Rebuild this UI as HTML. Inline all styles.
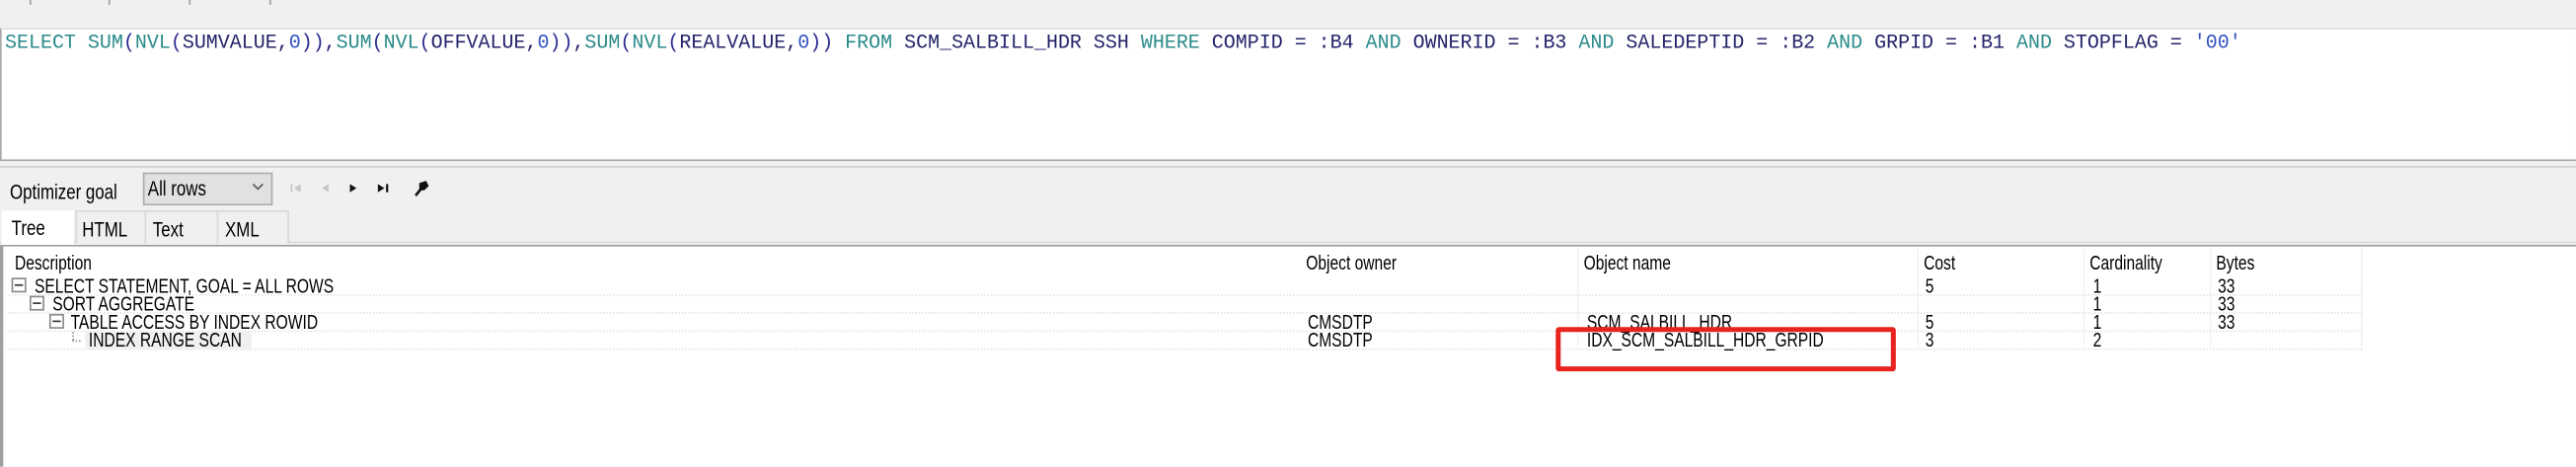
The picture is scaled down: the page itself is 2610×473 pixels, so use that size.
<!DOCTYPE html>
<html><head><meta charset="utf-8"><style>
html,body{margin:0;padding:0;width:2610px;height:471px;overflow:hidden;background:#f0f0f0}
#s{position:absolute;left:0;top:0;width:1568px;height:283px;transform:scale(1.6645);transform-origin:0 0;background:#f0f0f0;font-family:"Liberation Sans",sans-serif}
.a{position:absolute;white-space:nowrap}
.t{position:absolute;white-space:nowrap;font-size:12px;color:#000;transform:scaleX(.78);transform-origin:0 50%;line-height:11px}
.sql{font-family:"Liberation Mono",monospace;font-size:12px;color:#23236b}
.k{color:#2b8a8a}.n{color:#3050c0}.p{color:#2a2a90}
.tab{position:absolute;top:128px;height:19px;border:1px solid #d9d9d9;border-bottom:none;background:#f0f0f0}
.row{position:absolute;left:5px;width:1433px;height:0;border-top:1px dotted #e4e4e4}
.box{position:absolute;width:7px;height:7px;border:1px solid #8a8a8a;background:#fff}
.box:after{content:"";position:absolute;left:1px;top:3px;width:5px;height:1px;background:#333}
</style></head><body><div id="s">
<div class="a" style="left:18px;top:0;width:1px;height:3px;background:#a0a0a0"></div>
<div class="a" style="left:66px;top:0;width:1px;height:3px;background:#a0a0a0"></div>
<div class="a" style="left:115px;top:0;width:1px;height:3px;background:#a0a0a0"></div>
<div class="a" style="left:164px;top:0;width:1px;height:3px;background:#a0a0a0"></div>
<div class="a" style="left:0;top:17px;width:1567px;height:79px;background:#fff;border-left:1px solid #a8a8a8;border-bottom:1px solid #a8a8a8;border-top:1px solid #e0e0e0"></div>
<div class="a sql" style="left:3px;top:19px;line-height:14px"><span class="k">SELECT</span> <span class="k">SUM</span><span class="p">(</span><span class="k">NVL</span><span class="p">(</span>SUMVALUE,<span class="n">0</span><span class="p">))</span>,<span class="k">SUM</span><span class="p">(</span><span class="k">NVL</span><span class="p">(</span>OFFVALUE,<span class="n">0</span><span class="p">))</span>,<span class="k">SUM</span><span class="p">(</span><span class="k">NVL</span><span class="p">(</span>REALVALUE,<span class="n">0</span><span class="p">))</span> <span class="k">FROM</span> SCM_SALBILL_HDR SSH <span class="k">WHERE</span> COMPID = :B4 <span class="k">AND</span> OWNERID = :B3 <span class="k">AND</span> SALEDEPTID = :B2 <span class="k">AND</span> GRPID = :B1 <span class="k">AND</span> STOPFLAG = <span class="n">'00'</span></div>
<div class="a" style="left:0;top:101px;width:1568px;height:1px;background:#d0d0d0"></div>
<div class="t" style="left:6px;top:111px;font-size:13px">Optimizer goal</div>
<div class="a" style="left:87px;top:105px;width:77px;height:18px;background:#e1e1e1;border:1px solid #adadad"></div>
<div class="t" style="left:90px;top:109px;font-size:13px">All rows</div>
<svg class="a" style="left:153px;top:111px" width="8" height="6"><path d="M1 1 L4 4 L7 1" fill="none" stroke="#555" stroke-width="1"/></svg>
<svg class="a" style="left:176px;top:110px" width="90" height="10">
<rect x="1" y="2" width="1" height="5" fill="#c8c8c8"/><path d="M7 2 L3 4.5 L7 7Z" fill="#c8c8c8"/>
<path d="M24 2 L20 4.5 L24 7Z" fill="#c8c8c8"/>
<path d="M37 2 L41 4.5 L37 7Z" fill="#111"/>
<path d="M54 2 L58 4.5 L54 7Z" fill="#111"/><rect x="59" y="2" width="1.3" height="5" fill="#111"/>
<path d="M77 9 L81 4 M80 2 L83 1 L84 3 L82 5 L80 5Z" stroke="#111" stroke-width="1.6" fill="#111"/>
</svg>
<div class="a" style="left:0;top:147px;width:1568px;height:1px;background:#d9d9d9"></div>
<div class="tab" style="left:46px;width:41px"></div>
<div class="tab" style="left:88px;width:43px"></div>
<div class="tab" style="left:132px;width:42px"></div>
<div class="a" style="left:1px;top:128px;width:44px;height:21px;background:#fff"></div>
<div class="t" style="left:7px;top:133px;font-size:13px">Tree</div>
<div class="t" style="left:50px;top:134px;font-size:13px">HTML</div>
<div class="t" style="left:93px;top:134px;font-size:13px">Text</div>
<div class="t" style="left:137px;top:134px;font-size:13px">XML</div>
<div class="a" style="left:0;top:149px;width:1567px;height:134px;background:#fff;border-left:2px solid #a0a0a0;border-top:1px solid #a0a0a0"></div>
<div class="t" style="left:9px;top:155px">Description</div>
<div class="t" style="left:795px;top:155px">Object owner</div>
<div class="t" style="left:964px;top:155px">Object name</div>
<div class="t" style="left:1171px;top:155px">Cost</div>
<div class="t" style="left:1272px;top:155px">Cardinality</div>
<div class="t" style="left:1349px;top:155px">Bytes</div>
<div class="a" style="left:1437px;top:151px;width:1px;height:60px;background:#f0f0f0"></div>
<div class="a" style="left:960px;top:151px;width:1px;height:60px;background:#f4f4f4"></div>
<div class="a" style="left:1167px;top:151px;width:1px;height:60px;background:#f4f4f4"></div>
<div class="a" style="left:1268px;top:151px;width:1px;height:60px;background:#f4f4f4"></div>
<div class="a" style="left:1345px;top:151px;width:1px;height:60px;background:#f4f4f4"></div>
<div class="row" style="top:179px"></div><div class="row" style="top:190px"></div><div class="row" style="top:201px"></div><div class="row" style="top:212px"></div>
<div class="box" style="left:7px;top:169px"></div>
<div class="box" style="left:18px;top:180px"></div>
<div class="box" style="left:30px;top:191px"></div>
<div class="a" style="left:44px;top:202px;width:0;height:5px;border-left:1px dotted #999"></div>
<div class="a" style="left:44px;top:207px;width:5px;height:0;border-top:1px dotted #999"></div>
<div class="t" style="left:21px;top:169px">SELECT STATEMENT, GOAL = ALL ROWS</div>
<div class="t" style="left:32px;top:180px">SORT AGGREGATE</div>
<div class="t" style="left:43px;top:191px">TABLE ACCESS BY INDEX ROWID</div>
<div class="a" style="left:52px;top:202px;width:101px;height:11px;background:#f0f0f0"></div>
<div class="t" style="left:54px;top:202px">INDEX RANGE SCAN</div>
<div class="t" style="left:1172px;top:169px">5</div><div class="t" style="left:1274px;top:169px">1</div><div class="t" style="left:1350px;top:169px">33</div>
<div class="t" style="left:1274px;top:180px">1</div><div class="t" style="left:1350px;top:180px">33</div>
<div class="t" style="left:796px;top:191px">CMSDTP</div><div class="t" style="left:966px;top:191px">SCM_SALBILL_HDR</div><div class="t" style="left:1172px;top:191px">5</div><div class="t" style="left:1274px;top:191px">1</div><div class="t" style="left:1350px;top:191px">33</div>
<div class="t" style="left:796px;top:202px">CMSDTP</div><div class="t" style="left:966px;top:202px">IDX_SCM_SALBILL_HDR_GRPID</div><div class="t" style="left:1172px;top:202px">3</div><div class="t" style="left:1274px;top:202px">2</div>
<div class="a" style="left:947px;top:199px;width:201px;height:21px;border:3px solid #e8221e;border-radius:2px"></div>
</div></body></html>
